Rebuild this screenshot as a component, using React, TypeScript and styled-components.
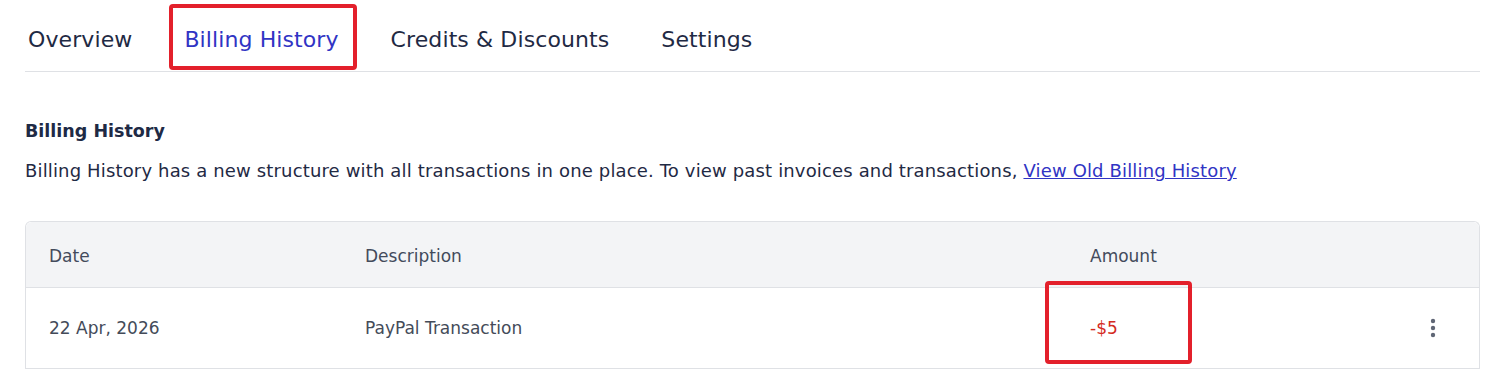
import styled, { createGlobalStyle } from 'styled-components';

const GlobalStyle = createGlobalStyle`
  body {
    margin: 0;
    background: #ffffff;
    font-family: 'DejaVu Sans', 'Open Sans', sans-serif;
    color: #1f2a44;
  }
`;

const Page = styled.div`
  padding: 0 20px 0 25px;
  width: 1500px;
  height: 373px;
  box-sizing: border-box;
  overflow: hidden;
`;

const Tabs = styled.nav`
  display: flex;
  gap: 52px;
  height: 72px;
  padding: 4px 0 0 3px;
  box-sizing: border-box;
  border-bottom: 1px solid #dfe1e5;
`;

const Tab = styled.span<{ $active?: boolean }>`
  position: relative;
  display: flex;
  align-items: center;
  height: 66px;
  padding-top: 5px;
  box-sizing: border-box;
  font-size: 22px;
  letter-spacing: 0.1px;
  color: ${(p) => (p.$active ? '#3034c4' : '#1f2a44')};
`;

const TabMark = styled.span`
  position: absolute;
  left: -15px;
  right: -18px;
  top: 0;
  bottom: 0;
  border: 4px solid #e3202b;
  border-radius: 4px;
  pointer-events: none;
`;

const Heading = styled.h2`
  margin: 48px 0 0;
  font-size: 17.5px;
  font-weight: 700;
  line-height: 22px;
  color: #1e2a45;
`;

const Note = styled.p`
  margin: 18px 0 0;
  font-size: 18px;
  line-height: 22px;
  letter-spacing: 0.15px;
  color: #1f2a44;
`;

const OldLink = styled.a`
  color: #3034c4;
  text-decoration: underline;
`;

const Table = styled.div`
  margin-top: 39px;
  border: 1px solid #dfe1e5;
  border-bottom: none;
  border-radius: 6px 6px 0 0;
`;

const Row = styled.div<{ $head?: boolean }>`
  display: grid;
  grid-template-columns: 316px 725px 1fr 40px;
  align-items: center;
  padding: 0 26px 0 23px;
  height: ${(p) => (p.$head ? '65px' : '80px')};
  background: ${(p) => (p.$head ? '#f3f4f6' : '#ffffff')};
  border-bottom: 1px solid #dfe1e5;
  border-radius: ${(p) => (p.$head ? '6px 6px 0 0' : '0')};
  font-size: 17px;
  color: ${(p) => (p.$head ? '#434b5c' : '#444b59')};
`;

const HeadCell = styled.span`
  padding-top: 2px;
`;

const Amount = styled.span`
  position: relative;
  align-self: stretch;
  display: flex;
  align-items: center;
  color: #d42a22;
`;

const AmountMark = styled.span`
  position: absolute;
  left: -45px;
  top: -7px;
  width: 147px;
  height: 83px;
  box-sizing: border-box;
  border: 4px solid #e3202b;
  border-radius: 4px;
  pointer-events: none;
`;

const Kebab = styled.button`
  display: flex;
  justify-content: center;
  align-items: center;
  border: none;
  background: none;
  padding: 0;
`;

export default function App() {
  return (
    <Page>
      <GlobalStyle />
      <Tabs>
        <Tab>Overview</Tab>
        <Tab $active>
          Billing History
          <TabMark />
        </Tab>
        <Tab>Credits &amp; Discounts</Tab>
        <Tab>Settings</Tab>
      </Tabs>
      <Heading>Billing History</Heading>
      <Note>
        Billing History has a new structure with all transactions in one place. To view past
        invoices and transactions, <OldLink href="#">View Old Billing History</OldLink>
      </Note>
      <Table>
        <Row $head>
          <HeadCell>Date</HeadCell>
          <HeadCell>Description</HeadCell>
          <HeadCell>Amount</HeadCell>
          <span />
        </Row>
        <Row>
          <span>22 Apr, 2026</span>
          <span>PayPal Transaction</span>
          <Amount>
            -$5
            <AmountMark />
          </Amount>
          <Kebab aria-label="More">
            <svg width="6" height="20" viewBox="0 0 6 20">
              <circle cx="3" cy="3" r="2.2" fill="#5f6675" />
              <circle cx="3" cy="10" r="2.2" fill="#5f6675" />
              <circle cx="3" cy="17" r="2.2" fill="#5f6675" />
            </svg>
          </Kebab>
        </Row>
      </Table>
    </Page>
  );
}
